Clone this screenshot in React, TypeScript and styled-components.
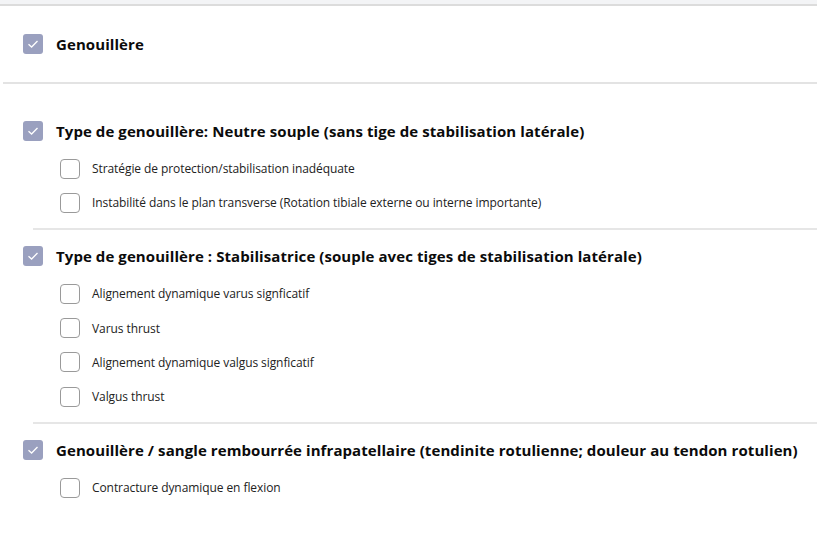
import React from "react";
import styled, { createGlobalStyle } from "styled-components";

const GlobalStyle = createGlobalStyle`
	html, body {
		margin: 0;
		padding: 0;
		background: #ffffff;
		font-family: "Open Sans", "Noto Sans", sans-serif;
		color: #111111;
	}
`;

const TopStrip = styled.div`
	height: 4px;
	background-color: #f3f4f6;
	border-bottom: 2px solid #dcdcdc;
`;

const Header = styled.div`
	display: flex;
	align-items: center;
	gap: 13px;
	padding: 28px 23px 28px 20px;
	border-bottom: 2px solid #e3e3e3;
	margin-left: 3px;
`;

const Body = styled.div`
	padding-top: 37px;
`;

const Section = styled.div<{ divided: boolean }>`
	border-top: ${({ divided }) => (divided ? "2px solid #e6e6e6" : "none")};
	margin-left: 33px;
	padding-top: ${({ divided }) => (divided ? "16.5px" : "0")};
	padding-bottom: 8px;
`;

const SectionRow = styled.div`
	display: flex;
	align-items: center;
	gap: 13px;
	margin-left: -10px;
	height: 20px;
`;

const SubList = styled.div`
	display: flex;
	flex-direction: column;
	gap: 14.3px;
	padding: 17.5px 0 7px 27px;
`;

const SubRow = styled.label`
	display: flex;
	align-items: center;
	gap: 12px;
	height: 20px;
`;

const Title = styled.span`
	font-weight: 700;
	font-size: 15px;
	letter-spacing: 0.08px;
	color: #0b0b0b;
`;

const SubText = styled.span`
	font-size: 12px;
	color: #222222;
	letter-spacing: -0.08px;
`;

const CheckedBox = styled.span`
	width: 20px;
	height: 20px;
	box-sizing: border-box;
	border-radius: 3px;
	background-color: #9aa0bf;
	display: flex;
	align-items: center;
	justify-content: center;
	flex-shrink: 0;
`;

const EmptyBox = styled.span`
	width: 20px;
	height: 20px;
	box-sizing: border-box;
	border: 1px solid #9a9a9a;
	border-radius: 4px;
	background: #ffffff;
	flex-shrink: 0;
`;

function Checked() {
	return (
		<CheckedBox>
			<svg width="12" height="10" viewBox="0 0 12 10">
				<path d="M1.5 5.2 L4.6 8 L10.5 2" fill="none" stroke="#ffffff" strokeWidth="1.3" />
			</svg>
		</CheckedBox>
	);
}

const SECTIONS = [
	{
		title: "Type de genouillère: Neutre souple (sans tige de stabilisation latérale)",
		items: [
			"Stratégie de protection/stabilisation inadéquate",
			"Instabilité dans le plan transverse (Rotation tibiale externe ou interne importante)",
		],
	},
	{
		title: "Type de genouillère : Stabilisatrice (souple avec tiges de stabilisation latérale)",
		items: [
			"Alignement dynamique varus signficatif",
			"Varus thrust",
			"Alignement dynamique valgus signficatif",
			"Valgus thrust",
		],
	},
	{
		title: "Genouillère / sangle rembourrée infrapatellaire (tendinite rotulienne; douleur au tendon rotulien)",
		items: ["Contracture dynamique en flexion"],
	},
];

export default function App() {
	return (
		<>
			<GlobalStyle />
			<TopStrip />
			<Header>
				<Checked />
				<Title>Genouillère</Title>
			</Header>
			<Body>
				{SECTIONS.map((section, i) => (
					<Section key={section.title} divided={i > 0}>
						<SectionRow>
							<Checked />
							<Title>{section.title}</Title>
						</SectionRow>
						<SubList>
							{section.items.map((item) => (
								<SubRow key={item}>
									<EmptyBox />
									<SubText>{item}</SubText>
								</SubRow>
							))}
						</SubList>
					</Section>
				))}
			</Body>
		</>
	);
}
